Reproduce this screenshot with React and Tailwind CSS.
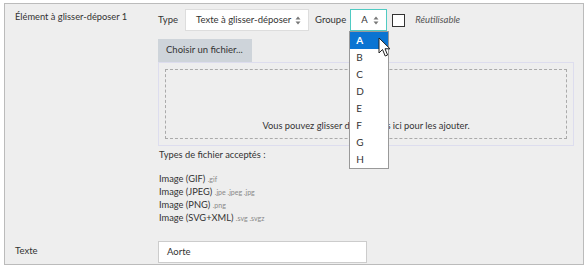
import React from "react";

const font = { fontFamily: "Lato, 'Liberation Sans', sans-serif" };

// petites flèches haut/bas des listes déroulantes
const Arrows = () => (
  <svg width="6" height="9" viewBox="0 0 6 9" className="text-[#777]">
    <path d="M3 0.5 L5.5 3.5 H0.5 Z" fill="currentColor" />
    <path d="M3 8.5 L5.5 5.5 H0.5 Z" fill="currentColor" />
  </svg>
);

const Cursor = () => (
  <svg width="14" height="21" viewBox="0 0 14 21">
    <path
      d="M1 1 L1 16 L4.5 12.5 L7.2 19 L9.6 18 L7 11.8 L12 11.8 Z"
      fill="#fff"
      stroke="#222"
      strokeWidth="1"
      strokeLinejoin="round"
    />
  </svg>
);

const groups = ["A", "B", "C", "D", "E", "F", "G", "H"];

const fileTypes = [
  ["Image (GIF)", ".gif"],
  ["Image (JPEG)", ".jpe .jpeg .jpg"],
  ["Image (PNG)", ".png"],
  ["Image (SVG+XML)", ".svg .svgz"],
];

export default function App() {
  return (
    <div className="w-[587px] h-[269px] bg-white pt-[3px] pl-[4px] text-[#333]" style={font}>
      <div className="w-[580px] h-[262px] border border-[#bbb] bg-[#eee] relative">
        {/* ligne élément */}
        <div className="flex">
          <div className="w-[153px] pl-[10px] pt-[7px] text-[9.3px] leading-[12px]">
            Élément à glisser-déposer 1
          </div>
          <div className="flex-1 pt-[5px]">
            <div className="flex items-center h-[22px] text-[9.5px] whitespace-nowrap">
              <span className="mr-[7px]">Type</span>
              <div className="w-[124px] h-[22px] bg-white border border-[#ddd] flex items-center justify-between pl-[10px] pr-[7px]">
                <span>Texte à glisser-déposer</span>
                <Arrows />
              </div>
              <span className="ml-[6px] mr-[4px]">Groupe</span>
              <div className="relative">
                <div className="w-[37px] h-[22px] bg-white border border-[#4fcbc3] flex items-center justify-between pl-[10px] pr-[7px]">
                  <span>A</span>
                  <Arrows />
                </div>
                <div className="absolute left-[-1px] top-[22px] w-[40px] bg-white border border-[#999] z-10">
                  {groups.map((g, i) => (
                    <div
                      key={g}
                      className={`h-[17px] flex items-center pl-[6px] text-[10px] ${i === 0 ? "bg-[#0a74d2] text-white font-bold" : "text-[#333]"}`}
                    >
                      {g}
                    </div>
                  ))}
                </div>
                <div className="absolute left-[28px] top-[28px] z-20">
                  <Cursor />
                </div>
              </div>
              <div className="ml-[5px] w-[13px] h-[13px] bg-white border border-[#333]" />
              <span className="ml-[10px] italic text-[#555]">Réutilisable</span>
            </div>

            {/* zone de dépôt */}
            <div className="mt-[8px]">
              <button className="block w-[94px] h-[23px] bg-[#ced4da] text-[9.5px] text-left pl-[8px]">
                Choisir un fichier...
              </button>
              <div className="w-[416px] h-[84px] border border-[#dde] p-[6px]">
                <div className="h-full border border-dashed border-[#aaa] flex items-end justify-center pb-[5px] text-[9.3px]">
                  Vous pouvez glisser des fichiers ici pour les ajouter.
                </div>
              </div>
            </div>

            <div className="mt-[3px] pl-[1px] text-[9.3px] leading-[12px]">Types de fichier acceptés :</div>
            <div className="mt-[11px] pl-[1px]">
              {fileTypes.map(([name, ext]) => (
                <div key={name} className="h-[13px] text-[9.3px] leading-[13px]">
                  {name} <span className="text-[7px] text-[#888]">{ext}</span>
                </div>
              ))}
            </div>
          </div>
        </div>

        {/* ligne texte */}
        <div className="flex mt-[17px]">
          <div className="w-[153px] pl-[10px] pt-[3px] text-[9.5px]">Texte</div>
          <div className="w-[209px] h-[22px] bg-white border border-[#ccc] flex items-center pl-[8px] text-[9.5px]">
            Aorte
          </div>
        </div>
      </div>
    </div>
  );
}
